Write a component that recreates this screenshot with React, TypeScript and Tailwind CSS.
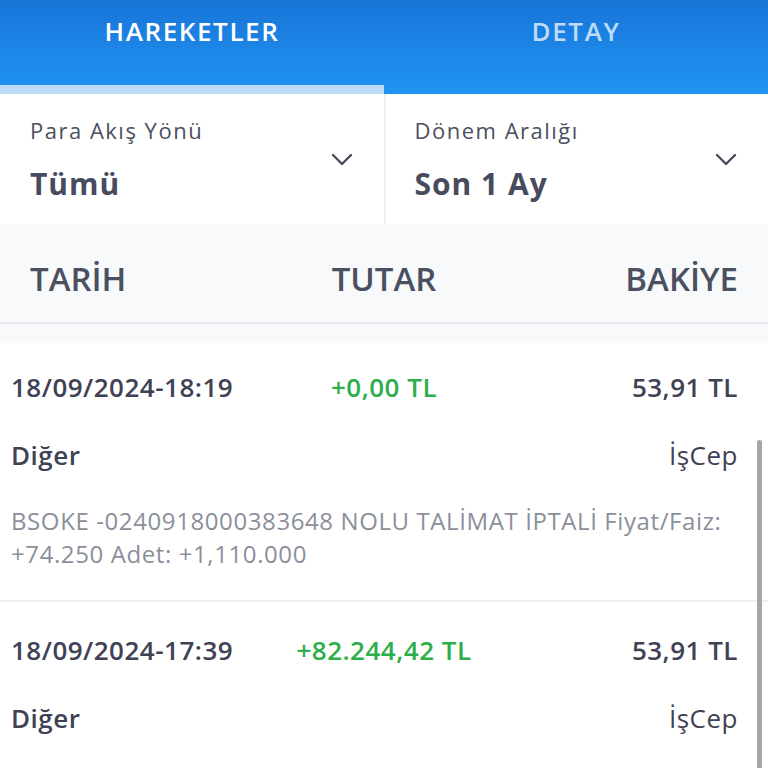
interface Tx {
  date: string;
  amount: string;
  balance: string;
  type: string;
  channel: string;
  desc?: string;
}

const txs: Tx[] = [
  {
    date: '18/09/2024-18:19',
    amount: '+0,00 TL',
    balance: '53,91 TL',
    type: 'Diğer',
    channel: 'İşCep',
    desc: 'BSOKE -0240918000383648 NOLU TALİMAT İPTALİ Fiyat/Faiz: +74.250 Adet: +1,110.000',
  },
  {
    date: '18/09/2024-17:39',
    amount: '+82.244,42 TL',
    balance: '53,91 TL',
    type: 'Diğer',
    channel: 'İşCep',
  },
];

function Chevron() {
  return (
    <svg width="22" height="13" viewBox="0 0 22 13" fill="none" className="shrink-0">
      <path d="M2 2l9 9 9-9" stroke="#474b5d" strokeWidth="2.4" strokeLinecap="round" strokeLinejoin="round" />
    </svg>
  );
}

function Filter({ label, value, pl }: { label: string; value: string; pl: string }) {
  return (
    <div className={`flex-1 flex items-center bg-white ${pl} pr-[31px]`}>
      <div className="flex-1 flex flex-col">
        <span className="text-[22px] leading-[30px] tracking-[1.5px] text-[#4b5060]">{label}</span>
        <span className="mt-[19px] text-[30px] leading-[40px] tracking-[1px] font-bold text-[#474b5d]">{value}</span>
      </div>
      <Chevron />
    </div>
  );
}

export default function App() {
  return (
    <div className="w-[768px] h-[768px] overflow-hidden bg-[#f7f9fb] font-['Open_Sans',sans-serif] relative">
      {/* Tabs */}
      <div className="h-[94px] flex bg-gradient-to-b from-[#1875d8] to-[#2194f1]">
        <div className="flex-1 flex flex-col">
          <div className="pt-[12px] text-center text-[26px] leading-[38px] tracking-[1.6px] font-semibold text-white">HAREKETLER</div>
          <div className="mt-auto h-[9px] bg-[#bcdcfa]" />
        </div>
        <div className="flex-1 flex flex-col">
          <div className="pt-[12px] text-center text-[26px] leading-[38px] tracking-[1.6px] font-semibold text-[#bcdcfa]">DETAY</div>
        </div>
      </div>

      {/* Filters */}
      <div className="h-[130px] flex gap-[2px] bg-[#eef0f3]">
        <Filter label="Para Akış Yönü" value="Tümü" pl="pl-[30px]" />
        <Filter label="Dönem Aralığı" value="Son 1 Ay" pl="pl-[29px]" />
      </div>

      {/* Table header */}
      <div className="h-[100px] grid grid-cols-3 items-center px-[30px] pt-[12px] border-b-2 border-[#e8eaed] text-[33px] font-semibold text-[#4b5061]">
        <span>TARİH</span>
        <span className="text-center">TUTAR</span>
        <span className="text-right">BAKİYE</span>
      </div>

      {/* Rows */}
      <div className="mt-[19px] bg-white">
        {txs.map((t, i) => (
          <div
            key={i}
            className={`pl-[11px] pr-[30px] ${i === 0 ? 'pt-[27px]' : 'pt-[31px]'} ${
              i < txs.length - 1 ? 'pb-[30px] border-b-2 border-[#eeeff1]' : 'pb-[60px]'
            }`}
          >
            <div className="relative flex items-center justify-between text-[26px] leading-[34px] tracking-[0.5px] font-semibold text-[#3e4254]">
              <span>{t.date}</span>
              {/* amount column is centred on the screen, not on the padded row */}
              <span className="absolute left-[calc(50%+9.5px)] -translate-x-1/2 text-[#2eae4b]">{t.amount}</span>
              <span>{t.balance}</span>
            </div>
            <div className="mt-[34px] flex items-center justify-between text-[26px] leading-[34px] tracking-[0.5px] text-[#3e4254]">
              <span className="font-semibold">{t.type}</span>
              <span>{t.channel}</span>
            </div>
            {t.desc && (
              <p className="mt-[32px] pr-[8px] text-[24px] leading-[33px] tracking-[0.6px] text-[#8b8f9a]">{t.desc}</p>
            )}
          </div>
        ))}
      </div>

      {/* Scrollbar */}
      <div className="absolute right-[6px] top-[440px] w-[5px] h-[340px] rounded-full bg-[#a6a6a6]" />
    </div>
  );
}
